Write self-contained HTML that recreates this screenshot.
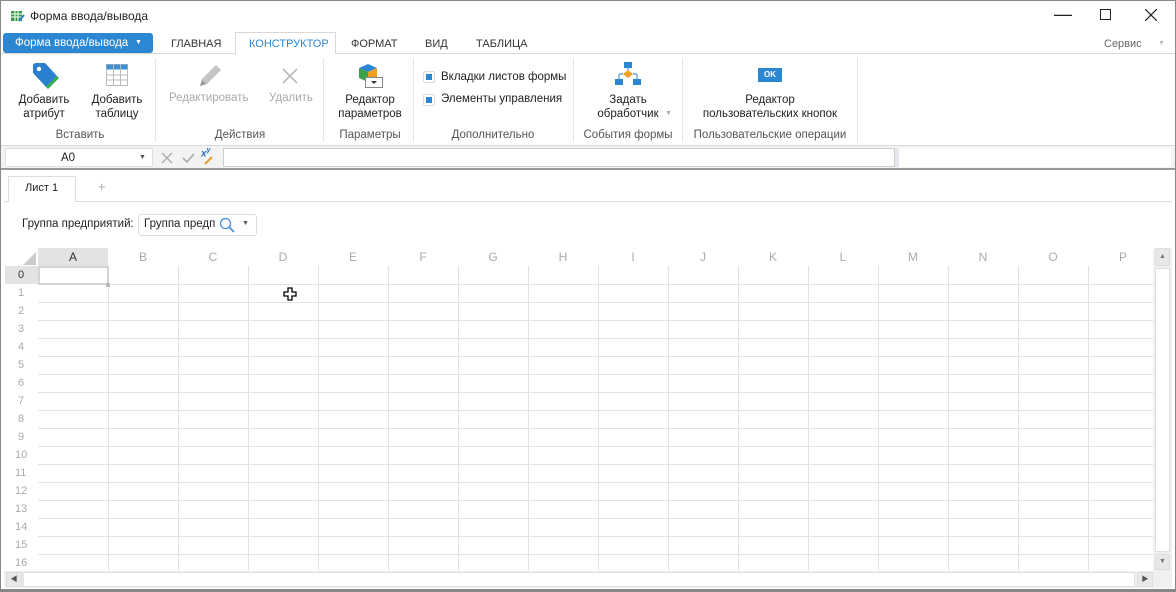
<!DOCTYPE html>
<html><head><meta charset="utf-8">
<style>
*{box-sizing:border-box;margin:0;padding:0}
body{width:1176px;height:592px;position:relative;overflow:hidden;background:#fff;font-family:"Liberation Sans","Noto Sans CJK SC",sans-serif;font-size:11.5px;color:#222}
.a{position:absolute}
.t{position:absolute;white-space:nowrap}
.c{text-align:center}
.g{color:#555}
.dis{color:#aaa}
.tab{position:absolute;top:38px;font-size:11px;white-space:nowrap;color:#333}
.sep{position:absolute;top:58px;width:1px;height:84px;background:#e6e6e6}
.col{position:absolute;top:248px;height:18px;line-height:18px;text-align:center;color:#aaa;font-size:12px;width:70px}
.vl{position:absolute;top:266px;width:1px;height:306px;background:#e3e3e3}
.hl{position:absolute;left:38px;width:1117px;height:1px;background:#e3e3e3}
.rn{position:absolute;left:5px;width:33px;height:18px;line-height:18px;padding-left:13px;color:#aaa;font-size:11px}
</style></head><body>
<div class="a" style="left:0;top:0;width:1176px;height:592px;border:1px solid #888;border-bottom:3px solid #888;z-index:9;pointer-events:none"></div>

<svg class="a" style="left:10px;top:9px" width="15" height="14" viewBox="0 0 15 14"><rect x="1" y="2" width="11" height="10" fill="#3a9c4a"/><path d="M1 5h11M1 8h11M5 2v10M8 2v10" stroke="#fff" stroke-width="1"/><path d="M9 12l5-6" stroke="#2b7bd0" stroke-width="2"/></svg>
<div class="t" style="left:30px;top:9px;font-size:12px">Форма ввода/вывода</div>
<div class="t" style="left:1054px;top:4px;font-size:18px;font-weight:300">—</div>
<div class="a" style="left:1100px;top:9px;width:11px;height:11px;border:1px solid #222"></div>
<svg class="a" style="left:1145px;top:9px" width="12" height="12"><path d="M0 0L12 12M12 0L0 12" stroke="#222" stroke-width="1.2"/></svg>

<div class="a" style="left:0;top:53px;width:1176px;height:1px;background:#d8d8d8"></div>
<div class="a" style="left:3px;top:33px;width:150px;height:20px;background:#2b87d1;border-radius:3px;color:#fff;line-height:20px;padding-left:12px;font-size:11.5px">Форма ввода/вывода<span style="position:absolute;left:132px;top:0;font-size:7px">▼</span></div>
<div class="tab" style="left:171px">ГЛАВНАЯ</div>
<div class="a" style="left:235px;top:32px;width:101px;height:22px;background:#fff;border:1px solid #d8d8d8;border-bottom:none"></div>
<div class="tab" style="left:249px;color:#2b87d1">КОНСТРУКТОР</div>
<div class="tab" style="left:351px">ФОРМАТ</div>
<div class="tab" style="left:425px">ВИД</div>
<div class="tab" style="left:476px">ТАБЛИЦА</div>
<div class="t" style="left:1104px;top:38px;color:#666;font-size:11px">Сервис</div>
<div class="t" style="left:1158px;top:40px;color:#bbb;font-size:7px">▼</div>

<svg class="a" style="left:30px;top:62px" width="30" height="28" viewBox="0 0 30 28"><path d="M3 4 Q3 1 6 1 L15 1 L27 14 L16 25 L3 11Z" fill="#2b7fcf"/><circle cx="9" cy="7" r="2.2" fill="#fff"/><path d="M17 26L28 15" stroke="#2fae4a" stroke-width="3"/></svg>
<div class="t c" style="left:10px;top:93px;width:68px;line-height:14px">Добавить<br>атрибут</div>
<svg class="a" style="left:106px;top:64px" width="22" height="22"><rect x="0.5" y="0.5" width="21" height="21" fill="#fff" stroke="#bbb"/><rect x="0.5" y="0.5" width="21" height="5" fill="#3d8fd6"/><path d="M0 11h22M0 16h22M7.5 0v22M14.5 0v22" stroke="#bbb"/></svg>
<div class="t c" style="left:83px;top:93px;width:68px;line-height:14px">Добавить<br>таблицу</div>
<div class="t c g" style="left:40px;top:129px;width:80px">Вставить</div>
<div class="sep" style="left:155px"></div>

<svg class="a" style="left:196px;top:62px" width="28" height="28"><path d="M4 24L6 17L20 3L25 8L11 22Z" fill="#c4c4c4"/><path d="M4 24L6 18L10 22Z" fill="#999"/></svg>
<div class="t dis" style="left:169px;top:92px">Редактировать</div>
<svg class="a" style="left:282px;top:68px" width="16" height="16"><path d="M1 1L15 15M15 1L1 15" stroke="#bbb" stroke-width="1.6"/></svg>
<div class="t dis" style="left:269px;top:92px">Удалить</div>
<div class="t c g" style="left:200px;top:129px;width:80px">Действия</div>
<div class="sep" style="left:323px"></div>

<svg class="a" style="left:356px;top:62px" width="30" height="28"><path d="M3 6L12 2L21 6L12 10Z" fill="#2b87d1"/><path d="M3 6L12 10V20L3 16Z" fill="#3aa24a"/><path d="M21 6L12 10V20L21 16Z" fill="#f0a020"/><rect x="9.5" y="15.5" width="17" height="10" fill="#fff" stroke="#888"/><path d="M15 19h6l-3 3z" fill="#333"/></svg>
<div class="t c" style="left:330px;top:93px;width:80px;line-height:14px">Редактор<br>параметров</div>
<div class="t c g" style="left:330px;top:129px;width:80px">Параметры</div>
<div class="sep" style="left:413px"></div>

<div class="a" style="left:423px;top:71px;width:12px;height:12px;border:1px solid #ddd;border-radius:2px;background:#fff"><div class="a" style="left:2px;top:2px;width:6px;height:6px;background:#2b87d1"></div></div>
<div class="t" style="left:441px;top:71px">Вкладки листов формы</div>
<div class="a" style="left:423px;top:94px;width:12px;height:12px;border:1px solid #ddd;border-radius:2px;background:#fff"><div class="a" style="left:2px;top:2px;width:6px;height:6px;background:#2b87d1"></div></div>
<div class="t" style="left:441px;top:93px">Элементы управления</div>
<div class="t c g" style="left:433px;top:129px;width:120px">Дополнительно</div>
<div class="sep" style="left:573px"></div>

<svg class="a" style="left:615px;top:62px" width="26" height="24"><rect x="9" y="0" width="8" height="6" fill="#2b87d1"/><path d="M13 6v3" stroke="#2b87d1"/><path d="M13 8L18 12L13 16L8 12Z" fill="#f0a020"/><path d="M4 12v6M22 12v6M4 12h4M18 12h4" stroke="#2b87d1"/><rect x="0" y="17" width="8" height="6" fill="#2b87d1"/><rect x="18" y="17" width="8" height="6" fill="#2b87d1"/></svg>
<div class="t c" style="left:588px;top:93px;width:80px;line-height:14px">Задать<br>обработчик</div>
<div class="t" style="left:665px;top:110px;color:#aaa;font-size:7px">▼</div>
<div class="t c g" style="left:578px;top:129px;width:100px">События формы</div>
<div class="sep" style="left:682px"></div>

<div class="a" style="left:758px;top:68px;width:24px;height:14px;background:#2b87d1;color:#fff;font-size:8px;font-weight:bold;text-align:center;line-height:14px">OK</div>
<div class="t c" style="left:690px;top:93px;width:160px;line-height:14px">Редактор<br>пользовательских кнопок</div>
<div class="t c g" style="left:690px;top:129px;width:160px">Пользовательские операции</div>
<div class="sep" style="left:857px"></div>

<div class="a" style="left:0;top:145px;width:1176px;height:25px;background:#f3f3f3;border-top:1px solid #d8d8d8;border-bottom:2px solid #999"></div>
<div class="a" style="left:5px;top:148px;width:148px;height:19px;background:#fff;border:1px solid #ddd;border-radius:2px"></div>
<div class="t" style="left:61px;top:152px">A0</div>
<div class="t" style="left:139px;top:154px;font-size:7px;color:#555">▼</div>
<svg class="a" style="left:161px;top:152px" width="12" height="12"><path d="M1 1L11 11M11 1L1 11" stroke="#aaa" stroke-width="1.3"/></svg>
<svg class="a" style="left:182px;top:152px" width="13" height="12"><path d="M1 6L5 10L12 2" stroke="#aaa" stroke-width="1.6" fill="none"/></svg>
<div class="t" style="left:201px;top:147px;font-size:10px;color:#2b6fb5;font-weight:bold;font-style:italic">x<sup style="font-size:7px">y</sup></div>
<svg class="a" style="left:204px;top:155px" width="10" height="10"><path d="M1 9L8 2" stroke="#e0a030" stroke-width="2"/></svg>
<div class="a" style="left:223px;top:148px;width:672px;height:19px;background:#fff;border:1px solid #ccc"></div>
<div class="a" style="left:895px;top:148px;width:4px;height:19px;background:#e8e8ee"></div>
<div class="a" style="left:899px;top:148px;width:272px;height:19px;background:#fff"></div>

<div class="a" style="left:4px;top:201px;width:1168px;height:1px;background:#ddd"></div>
<div class="a" style="left:8px;top:176px;width:68px;height:26px;background:#fff;border:1px solid #ddd;border-bottom:none"></div>
<div class="t" style="left:25px;top:182px;font-size:11px">Лист 1</div>
<div class="t" style="left:98px;top:179px;color:#aaa;font-size:13px">+</div>

<div class="t" style="left:22px;top:218px">Группа предприятий:</div>
<div class="a" style="left:138px;top:214px;width:119px;height:22px;border:1px solid #ddd;border-radius:3px;background:#fff;overflow:hidden"></div>
<div class="a" style="left:144px;top:218px;width:72px;overflow:hidden;white-space:nowrap">Группа предприятий</div>
<svg class="a" style="left:219px;top:217px" width="16" height="16"><circle cx="6.5" cy="6.5" r="5" fill="none" stroke="#4a90d6" stroke-width="1.3"/><path d="M10 10L15 15" stroke="#4a90d6" stroke-width="1.8"/></svg>
<div class="t" style="left:242px;top:220px;font-size:7px;color:#555">▼</div>

<svg class="a" style="left:22px;top:251px" width="14" height="14"><path d="M14 1V14H1Z" fill="#ccc"/></svg>
<div class="a" style="left:38px;top:248px;width:70px;height:18px;background:#e3e3e3"></div>
<div class="col" style="left:38px;color:#333">A</div>
<div class="col" style="left:108px">B</div><div class="col" style="left:178px">C</div><div class="col" style="left:248px">D</div><div class="col" style="left:318px">E</div><div class="col" style="left:388px">F</div><div class="col" style="left:458px">G</div><div class="col" style="left:528px">H</div><div class="col" style="left:598px">I</div><div class="col" style="left:668px">J</div><div class="col" style="left:738px">K</div><div class="col" style="left:808px">L</div><div class="col" style="left:878px">M</div><div class="col" style="left:948px">N</div><div class="col" style="left:1018px">O</div><div class="col" style="left:1088px">P</div>
<div class="vl" style="left:108px"></div><div class="vl" style="left:178px"></div><div class="vl" style="left:248px"></div><div class="vl" style="left:318px"></div><div class="vl" style="left:388px"></div><div class="vl" style="left:458px"></div><div class="vl" style="left:528px"></div><div class="vl" style="left:598px"></div><div class="vl" style="left:668px"></div><div class="vl" style="left:738px"></div><div class="vl" style="left:808px"></div><div class="vl" style="left:878px"></div><div class="vl" style="left:948px"></div><div class="vl" style="left:1018px"></div><div class="vl" style="left:1088px"></div>
<div class="hl" style="top:284px"></div><div class="hl" style="top:302px"></div><div class="hl" style="top:320px"></div><div class="hl" style="top:338px"></div><div class="hl" style="top:356px"></div><div class="hl" style="top:374px"></div><div class="hl" style="top:392px"></div><div class="hl" style="top:410px"></div><div class="hl" style="top:428px"></div><div class="hl" style="top:446px"></div><div class="hl" style="top:464px"></div><div class="hl" style="top:482px"></div><div class="hl" style="top:500px"></div><div class="hl" style="top:518px"></div><div class="hl" style="top:536px"></div><div class="hl" style="top:554px"></div>
<div class="a" style="left:5px;top:266px;width:33px;height:18px;background:#e3e3e3"></div>
<div class="rn" style="top:266px;color:#333">0</div>
<div class="rn" style="top:284px">1</div><div class="rn" style="top:302px">2</div><div class="rn" style="top:320px">3</div><div class="rn" style="top:338px">4</div><div class="rn" style="top:356px">5</div><div class="rn" style="top:374px">6</div><div class="rn" style="top:392px">7</div><div class="rn" style="top:410px">8</div><div class="rn" style="top:428px">9</div><div class="rn" style="top:446px;padding-left:10px">10</div><div class="rn" style="top:464px;padding-left:10px">11</div><div class="rn" style="top:482px;padding-left:10px">12</div><div class="rn" style="top:500px;padding-left:10px">13</div><div class="rn" style="top:518px;padding-left:10px">14</div><div class="rn" style="top:536px;padding-left:10px">15</div><div class="rn" style="top:554px;padding-left:10px">16</div>
<div class="a" style="left:38px;top:266px;width:71px;height:19px;border:2px solid #d4d4d4"></div>
<div class="a" style="left:106px;top:283px;width:4px;height:4px;background:#bbb"></div>
<svg class="a" style="left:283px;top:287px" width="15" height="15"><path d="M5 1h4v4h4v4h-4v4h-4v-4h-4v-4h4z" fill="#fff" stroke="#000" stroke-width="1.3"/></svg>

<div class="a" style="left:1153px;top:248px;width:19px;height:324px;background:#f0f0f0"></div>
<div class="a" style="left:1155px;top:248px;width:15px;height:18px;background:#e8e8e8;border:1px solid #ddd;border-radius:2px;font-size:7px;color:#777;text-align:center;line-height:16px">▲</div>
<div class="a" style="left:1155px;top:268px;width:15px;height:284px;background:#fff;border:1px solid #e0e0e0"></div>
<div class="a" style="left:1155px;top:554px;width:15px;height:16px;background:#e8e8e8;border:1px solid #ddd;font-size:7px;color:#777;text-align:center;line-height:14px">▼</div>
<div class="a" style="left:4px;top:571px;width:1168px;height:17px;background:#f0f0f0"></div>
<div class="a" style="left:6px;top:572px;width:16px;height:15px;background:#e8e8e8;border:1px solid #ddd;font-size:7px;color:#555;text-align:center;line-height:13px">◀</div>
<div class="a" style="left:23px;top:572px;width:1112px;height:15px;background:#fff;border:1px solid #e0e0e0"></div>
<div class="a" style="left:1137px;top:572px;width:16px;height:15px;background:#e8e8e8;border:1px solid #ddd;font-size:7px;color:#555;text-align:center;line-height:13px">▶</div>
</body></html>
